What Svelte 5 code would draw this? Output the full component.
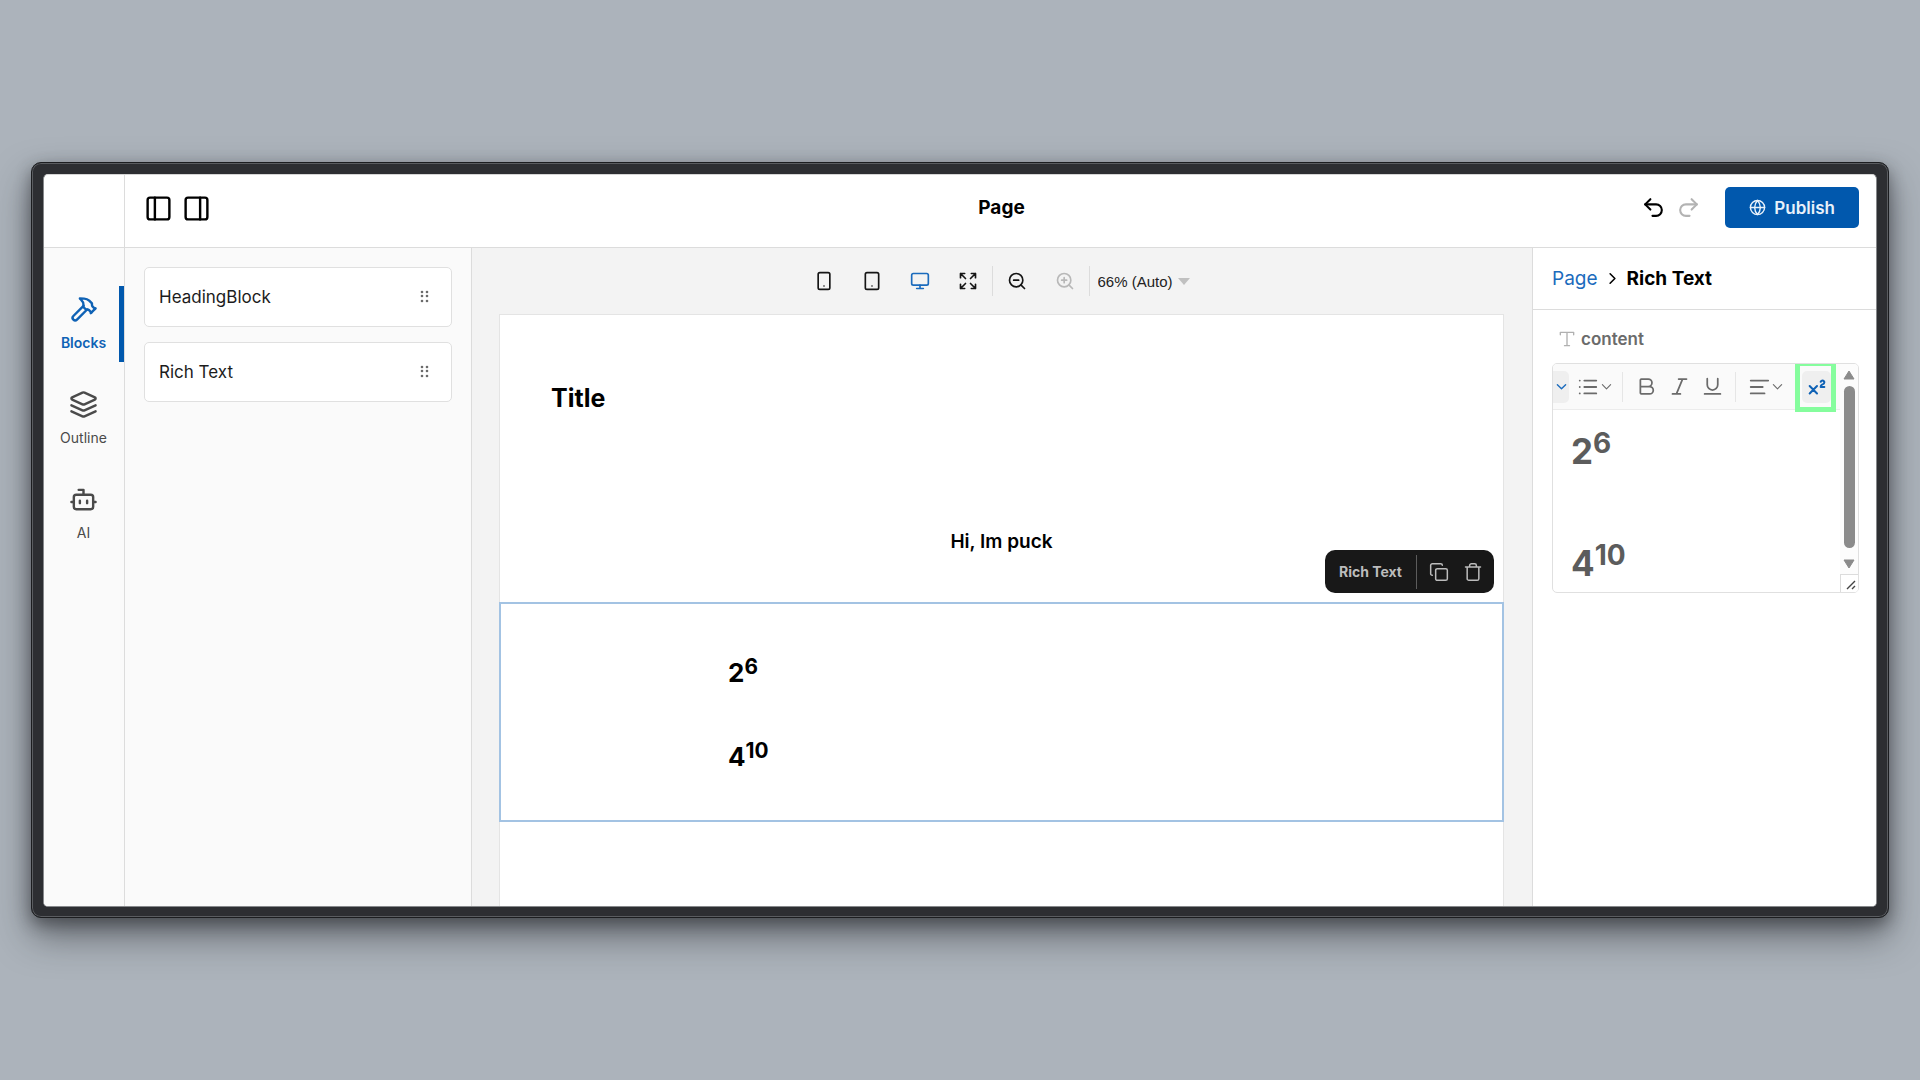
<style>
  :global(body) {
    background: #acb3bb;
  }

  * {
    box-sizing: border-box;
  }

  button {
    display: flex;
    align-items: center;
    justify-content: center;
    padding: 0;
    border: none;
    background: none;
    color: inherit;
    font: inherit;
    cursor: pointer;
  }

  svg {
    display: block;
    flex: none;
  }

  h1,
  h2,
  h3,
  p {
    margin: 0;
  }

  .page {
    display: flex;
    min-height: 100vh;
    padding: 162px 31px;
    font-family: Inter, "Liberation Sans", sans-serif;
    color: #000;
  }

  .frame {
    flex: 1;
    display: flex;
    padding: 11px 11px 10px;
    border: 1px solid #1c1d20;
    border-radius: 10px;
    background: #2d2e32;
    box-shadow: inset 0 0 0 1px #5a5c60, 0 18px 36px rgba(30, 32, 36, .5), 0 6px 16px rgba(30, 32, 36, .45);
  }

  .app {
    flex: 1;
    display: grid;
    grid-template-columns: 81px 347px 1fr 344px;
    grid-template-rows: 73px 1fr;
    border: 1px solid #86888b;
    border-top-color: #d5d5d5;
    border-radius: 5px;
    background: #fff;
    overflow: hidden;
  }

  .corner {
    border-right: 1px solid #dcdcdc;
    border-bottom: 1px solid #dcdcdc;
  }

  header {
    grid-column: 2 / -1;
    display: grid;
    grid-template-columns: 1fr auto 1fr;
    align-items: center;
    padding: 0 17px 7px 19px;
    border-bottom: 1px solid #dcdcdc;
  }

  header h1 {
    font-size: 19px;
    line-height: 24px;
    font-weight: 700;
  }

  .toggles {
    display: flex;
    gap: 9px;
    padding-top: 2px;
  }

  .actions {
    display: flex;
    align-items: center;
    justify-content: flex-end;
    gap: 10px;
  }

  .actions .off {
    color: #b3b3b3;
  }

  .publish {
    height: 41px;
    margin-left: 14px;
    padding: 0 24px;
    gap: 8px;
    border-radius: 5px;
    background: #0158ad;
    color: #e8f1fa;
    font-size: 17px;
    font-weight: 600;
  }

  .rail {
    display: flex;
    flex-direction: column;
    gap: 19px;
    padding-top: 38px;
    border-right: 1px solid #dcdcdc;
    background: #fafafa;
  }

  .rail button {
    flex-direction: column;
    gap: 9px;
    height: 76px;
    border-right: 5px solid transparent;
    padding-left: 4px;
    color: #4a4a4a;
    font-size: 14px;
    line-height: 20px;
  }

  .rail button.active {
    border-color: #0158ad;
    color: #0f62b5;
    font-weight: 600;
  }

  .blocks {
    display: flex;
    flex-direction: column;
    gap: 15px;
    padding: 19px;
    border-right: 1px solid #dcdcdc;
    background: #fafafa;
  }

  .card {
    display: flex;
    align-items: center;
    justify-content: space-between;
    height: 60px;
    padding: 0 20px 0 14px;
    border: 1px solid #e0e0e0;
    border-radius: 5px;
    background: #fff;
    color: #1c1c1c;
    font-size: 17px;
  }

  .stage {
    display: flex;
    flex-direction: column;
    padding: 0 28px 0 27px;
    background: #f3f3f3;
  }

  .viewports {
    display: flex;
    align-items: center;
    justify-content: center;
    height: 66px;
    padding-right: 14px;
    color: #151515;
  }

  .viewports button {
    width: 48px;
    height: 28px;
  }

  .viewports .active {
    color: #1b6bbd;
  }

  .viewports .off {
    color: #b8b8b8;
  }

  .divider {
    width: 1px;
    height: 30px;
    background: #dcdcdc;
  }

  .zoom {
    display: flex;
    align-items: center;
    padding-left: 8px;
    gap: 4px;
  }

  .zoom select {
    appearance: none;
    padding: 0;
    border: none;
    background: none;
    color: #222;
    font: 15px "Liberation Sans", Arial, sans-serif;
  }

  .canvas {
    flex: 1;
    border: 1px solid #e4e4e4;
    border-bottom: none;
    background: #fff;
  }

  .canvas h2 {
    padding: 67px 51px 0;
    font-size: 25px;
    line-height: 32px;
    font-weight: 700;
  }

  .canvas h3 {
    padding: 116px 0 48px;
    text-align: center;
    font-size: 19px;
    line-height: 24px;
    font-weight: 600;
  }

  .selected {
    position: relative;
    height: 220px;
    margin: 0 -1px;
    padding: 48px 227px 0;
    border: 2px solid #a3c3e3;
    font-size: 26px;
    font-weight: 700;
  }

  .selected p {
    height: 84px;
    line-height: 42px;
  }

  sup {
    font-size: 80%;
    line-height: 0;
    vertical-align: .4em;
  }

  .bar {
    position: absolute;
    right: 8px;
    bottom: 227px;
    display: flex;
    align-items: center;
    height: 43px;
    padding: 0 4px 0 14px;
    border-radius: 10px;
    background: #181818;
    color: #bcbcbc;
    font-size: 14px;
    line-height: 20px;
  }

  .bar span {
    padding-right: 14px;
  }

  .bar i {
    width: 1px;
    height: 34px;
    margin-right: 5px;
    background: #5c5c5c;
  }

  .bar button {
    width: 34px;
    height: 34px;
  }

  aside {
    border-left: 1px solid #dcdcdc;
    background: #fff;
  }

  nav {
    display: flex;
    align-items: center;
    gap: 5px;
    height: 62px;
    padding: 0 19px;
    border-bottom: 1px solid #dcdcdc;
    font-size: 19px;
    line-height: 24px;
    font-weight: 700;
  }

  nav a {
    color: #1b6bbd;
    font-weight: 400;
    text-decoration: none;
  }

  .label {
    display: flex;
    align-items: center;
    gap: 4px;
    margin: 18px 24px 13px;
    color: #6b6b6b;
    font-size: 17px;
    line-height: 22px;
    font-weight: 600;
  }

  .label svg {
    color: #b0b0b0;
  }

  .editor {
    display: flex;
    height: 230px;
    margin: 0 17px 0 19px;
    border: 1px solid #e0e0e0;
    border-radius: 5px;
    overflow: hidden;
  }

  .writing {
    flex: 1;
  }

  .toolbar {
    display: flex;
    align-items: center;
    height: 46px;
    border-bottom: 1px solid #ececec;
    background: #fafafa;
    color: #6b6b6b;
  }

  .toolbar button {
    width: 33px;
    height: 32px;
    border-radius: 5px;
  }

  .toolbar .heading {
    width: 16px;
    border-radius: 0 5px 5px 0;
    background: #efefef;
    color: #1b6bbd;
  }

  .toolbar .menu {
    width: 43px;
    gap: 2px;
  }

  .toolbar .divider {
    background: #e6e6e6;
  }

  .lists {
    margin: 0 6px 0 4px;
  }

  .marks {
    display: flex;
    padding: 0 6px 0 7px;
  }

  .aligns {
    margin: 0 15px 0 8px;
  }

  .superscript {
    position: relative;
  }

  .toolbar .superscript button {
    width: 29px;
    background: #efefef;
    color: #0f62b5;
  }

  .superscript::after {
    content: "";
    position: absolute;
    inset: -10px -5px -9px -7px;
    border: 5px solid #85fd9d;
    pointer-events: none;
  }

  .text {
    padding: 17px 18px 0;
    color: #5c5c5c;
    font-size: 35px;
    font-weight: 700;
    outline: none;
  }

  .text p {
    height: 112px;
    line-height: 48px;
  }

  .scroll {
    display: flex;
    flex-direction: column;
    width: 18px;
    align-items: center;
    background: #fcfcfc;
    color: #8b8b8b;
  }

  .scroll .up {
    margin: 6px 0;
  }

  .thumb {
    flex: 1;
    width: 11px;
    border-radius: 6px;
    background: #8b8b8b;
  }

  .scroll .down {
    margin: 11px 0 5px;
  }

  .grip {
    display: flex;
    align-items: flex-end;
    justify-content: flex-end;
    width: 18px;
    height: 18px;
    padding: 1px;
    border: solid #dcdcdc;
    border-width: 1px 0 0 1px;
    background: #fff;
    color: #444;
  }
</style>

<script>
let tabs = [
  { name: "Blocks", icon: "hammer" },
  { name: "Outline", icon: "layers" },
  { name: "AI", icon: "bot" }
]
let activeTab = $state("Blocks")

let blocks = ["HeadingBlock", "Rich Text"]

let viewports = ["phone", "tablet", "monitor", "expand"]
let activeViewport = $state("monitor")

let marks = ["bold", "italic", "underline"]

let icons = {
  panelLeft: '<rect width="18" height="18" x="3" y="3" rx="2"/><path d="M9 3v18"/>',
  panelRight: '<rect width="18" height="18" x="3" y="3" rx="2"/><path d="M15 3v18"/>',
  undo: '<path d="M9 14 4 9l5-5"/><path d="M4 9h10.5a5.5 5.5 0 0 1 0 11H11"/>',
  redo: '<path d="m15 14 5-5-5-5"/><path d="M20 9H9.5a5.5 5.5 0 0 0 0 11H13"/>',
  globe: '<circle cx="12" cy="12" r="10"/><path d="M12 2a14.5 14.5 0 0 0 0 20 14.5 14.5 0 0 0 0-20"/><path d="M2 12h20"/>',
  hammer: '<path d="m15 12-8.373 8.373a1 1 0 1 1-3-3L12 9"/><path d="m18 15 4-4"/><path d="m21.5 11.5-1.914-1.914A2 2 0 0 1 19 8.172V7l-2.26-2.26a6 6 0 0 0-4.202-1.756L9 2.96l.92.82A6.18 6.18 0 0 1 12 8.4V10l2 2h1.172a2 2 0 0 1 1.414.586L18.5 14.5"/>',
  layers: '<path d="M12.83 2.18a2 2 0 0 0-1.66 0L2.6 6.08a1 1 0 0 0 0 1.83l8.58 3.91a2 2 0 0 0 1.66 0l8.58-3.9a1 1 0 0 0 0-1.83Z"/><path d="m22 17.65-9.17 4.16a2 2 0 0 1-1.66 0L2 17.65"/><path d="m22 12.65-9.17 4.16a2 2 0 0 1-1.66 0L2 12.65"/>',
  bot: '<path d="M12 8V4H8"/><rect width="16" height="12" x="4" y="8" rx="2"/><path d="M2 14h2M20 14h2M15 13v2M9 13v2"/>',
  phone: '<rect width="14" height="20" x="5" y="2" rx="2"/><path d="M12 18h.01"/>',
  tablet: '<rect width="16" height="20" x="4" y="2" rx="2"/><path d="M12 18h.01"/>',
  monitor: '<rect width="20" height="14" x="2" y="3" rx="2"/><path d="M8 21h8M12 17v4"/>',
  expand: '<path d="m15 15 6 6M15 9l6-6M21 16v5h-5M21 8V3h-5M3 16v5h5M3 21l6-6M3 8V3h5M9 9 3 3"/>',
  zoomOut: '<circle cx="11" cy="11" r="8"/><path d="m21 21-4.35-4.35M8 11h6"/>',
  zoomIn: '<circle cx="11" cy="11" r="8"/><path d="m21 21-4.35-4.35M11 8v6M8 11h6"/>',
  copy: '<rect width="14" height="14" x="8" y="8" rx="2"/><path d="M4 16c-1.1 0-2-.9-2-2V4c0-1.1.9-2 2-2h10c1.1 0 2 .9 2 2"/>',
  trash: '<path d="M3 6h18M19 6v14c0 1-1 2-2 2H7c-1 0-2-1-2-2V6M8 6V4c0-1 1-2 2-2h4c1 0 2 1 2 2v2"/>',
  chevronRight: '<path d="m9 18 6-6-6-6"/>',
  chevronDown: '<path d="m3 8 9 9 9-9"/>',
  type: '<path d="M4 7V4h16v3M9 20h6M12 4v16"/>',
  list: '<path d="M8 5h13M8 12h13M8 19h13M3 5h.01M3 12h.01M3 19h.01"/>',
  bold: '<path d="M5 12h10.5a4 4 0 0 1 0 8.500H6a1 1 0 0 1-1-1V4.500a1 1 0 0 1 1-1h8a4 4 0 0 1 0 8.500"/>',
  italic: '<path d="M20 3.500h-9M13 20.500H4M15.500 3.500l-7 17"/>',
  underline: '<path d="M6 3v7a6 6 0 0 0 12 0V3M3 20.500h18"/>',
  align: '<path d="M22 5H3M16 12H3M18 19H3"/>',
  superscript: '<path d="m4 19 8-8M12 19l-8-8M20 12h-4c0-1.5.44-2 1.5-2.5S20 8.33 20 7c0-.47-.17-.93-.48-1.29a2.11 2.11 0 0 0-2.62-.44c-.42.24-.74.62-.9 1.07"/>'
}
</script>

{#snippet icon(name, size, stroke = 2)}
  <svg width={size} height={size} viewBox="0 0 24 24" fill="none" stroke="currentColor" stroke-width={stroke} stroke-linecap="round" stroke-linejoin="round" aria-hidden="true">
    {@html icons[name]}
  </svg>
{/snippet}

<div class="page">
  <div class="frame">
    <div class="app">
      <div class="corner"></div>

      <header>
        <div class="toggles">
          <button aria-label="Toggle left panel">{@render icon("panelLeft", 29)}</button>
          <button aria-label="Toggle right panel">{@render icon("panelRight", 29)}</button>
        </div>
        <h1>Page</h1>
        <div class="actions">
          <button aria-label="Undo">{@render icon("undo", 25)}</button>
          <button class="off" aria-label="Redo">{@render icon("redo", 25)}</button>
          <button class="publish">{@render icon("globe", 17)} Publish</button>
        </div>
      </header>

      <div class="rail">
        {#each tabs as tab}
          <button class:active={activeTab === tab.name} onclick={() => activeTab = tab.name}>
            {@render icon(tab.icon, 29)}
            {tab.name}
          </button>
        {/each}
      </div>

      <div class="blocks">
        {#each blocks as block}
          <div class="card">
            {block}
            <svg width="12" height="14" viewBox="0 0 12 14" fill="#6b6b6b" aria-hidden="true">
              {#each [2, 6, 11] as y}
                <circle cx="3" cy={y} r="1.3" />
                <circle cx="8" cy={y} r="1.3" />
              {/each}
            </svg>
          </div>
        {/each}
      </div>

      <main class="stage">
        <div class="viewports">
          {#each viewports as viewport}
            <button class:active={activeViewport === viewport} aria-label={viewport} onclick={() => activeViewport = viewport}>
              {@render icon(viewport, 20)}
            </button>
          {/each}
          <div class="divider"></div>
          <button aria-label="Zoom out">{@render icon("zoomOut", 20)}</button>
          <button class="off" aria-label="Zoom in">{@render icon("zoomIn", 20)}</button>
          <div class="divider"></div>
          <div class="zoom">
            <select aria-label="Zoom">
              <option>66% (Auto)</option>
            </select>
            <svg width="12" height="7" viewBox="0 0 12 7" fill="#c0c0c0" aria-hidden="true"><path d="M0 0h12L6 7z" /></svg>
          </div>
        </div>

        <div class="canvas">
          <h2>Title</h2>
          <h3>Hi, Im puck</h3>
          <div class="selected">
            <p>2<sup>6</sup></p>
            <p>4<sup>10</sup></p>
            <div class="bar">
              <span>Rich Text</span>
              <i></i>
              <button aria-label="Duplicate">{@render icon("copy", 20, 1.8)}</button>
              <button aria-label="Delete">{@render icon("trash", 20, 1.8)}</button>
            </div>
          </div>
        </div>
      </main>

      <aside>
        <nav>
          <a href="#page">Page</a>
          {@render icon("chevronRight", 19)}
          <span>Rich Text</span>
        </nav>
        <div class="label" id="content-label">
          {@render icon("type", 20, 1.6)}
          content
        </div>
        <div class="editor">
          <div class="writing">
            <div class="toolbar">
              <button class="heading" aria-label="Heading level">{@render icon("chevronDown", 11, 3)}</button>
              <div class="lists">
                <button class="menu" aria-label="Lists">{@render icon("list", 22)}{@render icon("chevronDown", 11, 2.4)}</button>
              </div>
              <div class="divider"></div>
              <div class="marks">
                {#each marks as mark}
                  <button aria-label={mark}>{@render icon(mark, 21)}</button>
                {/each}
              </div>
              <div class="divider"></div>
              <div class="aligns">
                <button class="menu" aria-label="Alignment">{@render icon("align", 22)}{@render icon("chevronDown", 11, 2.4)}</button>
              </div>
              <div class="superscript">
                <button aria-label="Superscript">{@render icon("superscript", 22, 2.2)}</button>
              </div>
            </div>
            <div class="text" contenteditable="true" role="textbox" tabindex="0" aria-labelledby="content-label">
              <p>2<sup>6</sup></p>
              <p>4<sup>10</sup></p>
            </div>
          </div>
          <div class="scroll">
            <svg class="up" width="12" height="10" viewBox="0 0 12 10" fill="currentColor" stroke="currentColor" stroke-linejoin="round" aria-hidden="true"><path d="M6 1 11 9H1z" /></svg>
            <div class="thumb"></div>
            <svg class="down" width="12" height="10" viewBox="0 0 12 10" fill="currentColor" stroke="currentColor" stroke-linejoin="round" aria-hidden="true"><path d="M6 9 1 1h10z" /></svg>
            <div class="grip">
              <svg width="12" height="12" viewBox="0 0 12 12" fill="none" stroke="currentColor" stroke-width="1.4" aria-hidden="true"><path d="m2 10 8-8M7 10l3-3" /></svg>
            </div>
          </div>
        </div>
      </aside>
    </div>
  </div>
</div>
